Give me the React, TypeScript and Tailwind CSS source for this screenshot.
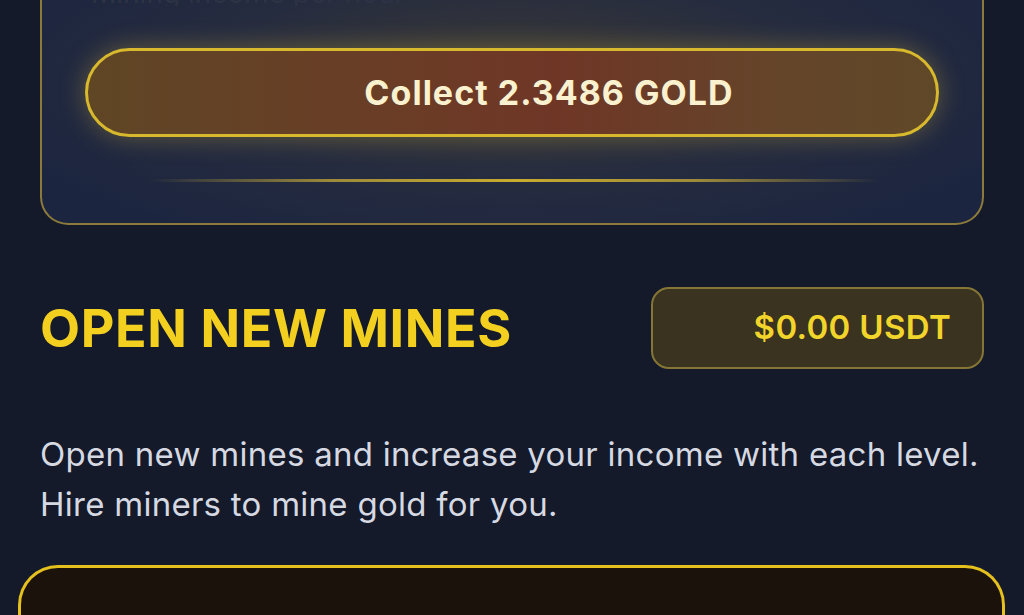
const MinesPanel = () => {
  return (
    <div className="h-[615px] w-full overflow-hidden bg-[#141a2a] font-['Inter','Noto_Sans',sans-serif]">
      {/* collect card, top is scrolled out of view */}
      <div className="mx-[40px] -mt-[40px] rounded-b-[28px] border-2 border-t-0 border-[#8c7a3c] bg-[radial-gradient(ellipse_60%_70%_at_50%_45%,#3b3a36_0%,#262c3f_55%,#1c2540_100%)] px-[43px] pb-[41px]">
        <div className="flex h-[46px] items-end overflow-hidden pl-[6px] text-[28px] leading-[28px] text-[#2d3344]">
          <span className="translate-y-[1px]">Mining income per hour</span>
        </div>
        <button className="mt-[42px] flex h-[89px] w-full items-center justify-center rounded-full border-[3px] border-[#d8b82c] bg-[linear-gradient(90deg,#5f4625_0%,#6a3d26_35%,#6f3626_55%,#65442a_80%,#5f4827_100%)] pl-[74px] text-[34px] font-bold tracking-[0.03em] text-[#fbf1cf] shadow-[0_0_26px_rgba(214,180,60,0.35)]">
          Collect 2.3486 GOLD
        </button>
        <div className="ml-[65px] mr-[60px] mt-[42px] h-[3px] bg-[linear-gradient(90deg,transparent,#9d8a3a_25%,#c9ab2e_50%,#9d8a3a_75%,transparent)]" />
      </div>

      <div className="mt-[62px] flex items-center justify-between px-[40px]">
        <h2 className="pt-[2px] text-[52px] font-bold leading-none tracking-[0.012em] text-[#f3d020]">
          OPEN NEW MINES
        </h2>
        <div className="flex h-[82px] w-[333px] items-center justify-end rounded-[18px] border-2 border-[#857636] bg-[#39331f] pr-[31px] text-[33px] font-semibold tracking-[0.01em] text-[#f2d52b]">
          $0.00 USDT
        </div>
      </div>

      <p className="mt-[60px] px-[40px] text-[33px] leading-[50px] tracking-[0.008em] text-[#d6d9e2]">
        Open new mines and increase your income with each level.
        <br />
        Hire miners to mine gold for you.
      </p>

      <div className="ml-[18px] mr-[19px] mt-[36px] h-[80px] rounded-t-[40px] border-[3px] border-b-0 border-[#e6c01d] bg-[#1b120b]" />
    </div>
  );
};

export default function App() {
  return <MinesPanel />;
}
